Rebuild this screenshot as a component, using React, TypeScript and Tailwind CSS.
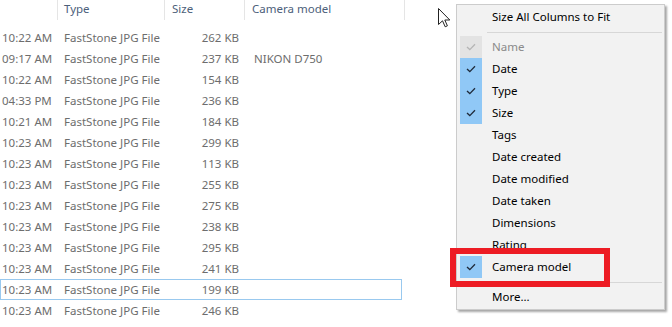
import React from "react";

const rows: { t: string; s: string; c?: string; focus?: boolean }[] = [
  { t: "10:22 AM", s: "262 KB" },
  { t: "09:17 AM", s: "237 KB", c: "NIKON D750" },
  { t: "10:22 AM", s: "154 KB" },
  { t: "04:33 PM", s: "236 KB" },
  { t: "10:21 AM", s: "184 KB" },
  { t: "10:23 AM", s: "299 KB" },
  { t: "10:23 AM", s: "113 KB" },
  { t: "10:23 AM", s: "255 KB" },
  { t: "10:23 AM", s: "275 KB" },
  { t: "10:23 AM", s: "238 KB" },
  { t: "10:23 AM", s: "295 KB" },
  { t: "10:23 AM", s: "241 KB" },
  { t: "10:23 AM", s: "199 KB", focus: true },
  { t: "10:23 AM", s: "246 KB" },
];

const menu: { label: string; state?: "on" | "dis" }[] = [
  { label: "Name", state: "dis" },
  { label: "Date", state: "on" },
  { label: "Type", state: "on" },
  { label: "Size", state: "on" },
  { label: "Tags" },
  { label: "Date created" },
  { label: "Date modified" },
  { label: "Date taken" },
  { label: "Dimensions" },
  { label: "Rating" },
  { label: "Camera model", state: "on" },
];

function Check({ color }: { color: string }) {
  return (
    <svg width="10" height="8" viewBox="0 0 10 8">
      <path d="M1 4 L3.8 6.6 L9 1.2" fill="none" stroke={color} strokeWidth="1.3" />
    </svg>
  );
}

export default function App() {
  return (
    <div
      className="relative w-[672px] h-[327px] bg-white overflow-hidden text-[11.5px]"
      style={{ fontFamily: '"Noto Sans", "Open Sans", sans-serif' }}
    >
      {/* header */}
      <div className="flex h-[20px] text-[#4c607a]">
        <div className="w-[58px] border-r border-[#e5e5e5]" />
        <div className="w-[107px] border-r border-[#e5e5e5] pl-[6px] leading-[17px]">Type</div>
        <div className="w-[80px] border-r border-[#e5e5e5] pl-[7px] leading-[17px]">Size</div>
        <div className="w-[160px] border-r border-[#e5e5e5] pl-[7px] leading-[17px]">Camera model</div>
      </div>
      {/* rows */}
      <div className="mt-[7px] flex flex-col text-[#6d6d6d]">
        {rows.map((r, i) => (
          <div
            key={i}
            className={`flex h-[21px] items-center w-[402px] ${r.focus ? "border border-[#99c9ef]" : "border border-transparent"}`}
          >
            <div className="w-[63px] pl-[1px] whitespace-nowrap">{r.t}</div>
            <div className="w-[102px] whitespace-nowrap">FastStone JPG File</div>
            <div className="w-[73px] text-right whitespace-nowrap">{r.s}</div>
            <div className="pl-[15px] whitespace-nowrap">{r.c ?? ""}</div>
          </div>
        ))}
      </div>

      {/* cursor */}
      <svg className="absolute left-[438px] top-[8px]" width="13" height="20" viewBox="0 0 13 20">
        <path
          d="M0.5 0.5 L0.5 16.5 L4.5 12.8 L7.2 18.8 L9.4 17.8 L6.8 12 L11.8 12 Z"
          fill="white"
          stroke="#222"
          strokeWidth="1"
          strokeLinejoin="miter"
        />
      </svg>

      {/* context menu */}
      <div className="absolute left-[456px] top-[4px] w-[209px] h-[306px] bg-[#f2f2f2] border border-[#cccccc] shadow-[2px_2px_2px_rgba(0,0,0,0.35)] pt-[1px] text-black">
        <div className="h-[22px] flex items-center pl-[35px]">Size All Columns to Fit</div>
        <div className="h-[8px] flex items-center pl-[30px] pr-[2px]">
          <div className="h-px w-full bg-[#d7d7d7]" />
        </div>
        {menu.map((m) => (
          <div key={m.label} className="h-[22px] flex items-center">
            <div
              className={`ml-[3px] w-[22px] h-[22px] flex items-center justify-center ${
                m.state === "on" ? "bg-[#90c8f6]" : m.state === "dis" ? "bg-[#e3e3e3]" : ""
              }`}
            >
              {m.state === "on" && <Check color="#1f2a3a" />}
              {m.state === "dis" && <Check color="#b5b5b5" />}
            </div>
            <div className={`pl-[10px] ${m.state === "dis" ? "text-[#8a8a8a]" : ""}`}>{m.label}</div>
          </div>
        ))}
        <div className="h-[8px] flex items-center pl-[30px] pr-[2px]">
          <div className="h-px w-full bg-[#d7d7d7]" />
        </div>
        <div className="h-[22px] flex items-center pl-[35px]">More...</div>
      </div>

      {/* red highlight */}
      <div className="absolute left-[450px] top-[248px] w-[160px] h-[39px] border-[6px] border-[#ed1c24]" />
    </div>
  );
}
